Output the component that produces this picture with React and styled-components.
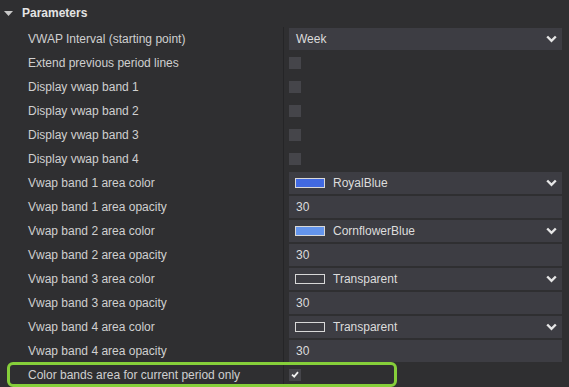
import styled, { createGlobalStyle } from "styled-components";

const GlobalStyle = createGlobalStyle`
  html, body {
    margin: 0;
    padding: 0;
    background: #2f2f31;
    overflow: hidden;
  }
  body {
    font-family: "Liberation Sans", Arial, sans-serif;
  }
`;

const rows = [
  { label: "VWAP Interval (starting point)", type: "select", value: "Week" },
  { label: "Extend previous period lines", type: "check" },
  { label: "Display vwap band 1", type: "check" },
  { label: "Display vwap band 2", type: "check" },
  { label: "Display vwap band 3", type: "check" },
  { label: "Display vwap band 4", type: "check" },
  { label: "Vwap band 1 area color", type: "color", value: "RoyalBlue", swatch: "#4169e1" },
  { label: "Vwap band 1 area opacity", type: "text", value: "30" },
  { label: "Vwap band 2 area color", type: "color", value: "CornflowerBlue", swatch: "#6495ed" },
  { label: "Vwap band 2 area opacity", type: "text", value: "30" },
  { label: "Vwap band 3 area color", type: "color", value: "Transparent" },
  { label: "Vwap band 3 area opacity", type: "text", value: "30" },
  { label: "Vwap band 4 area color", type: "color", value: "Transparent" },
  { label: "Vwap band 4 area opacity", type: "text", value: "30" },
  { label: "Color bands area for current period only", type: "check", checked: true, highlight: true },
];

const Chevron = () => (
  <svg width="11" height="8" viewBox="0 0 11 8">
    <path d="M1.2 1.5 L5.5 5.8 L9.8 1.5" fill="none" stroke="#e6e6e6" strokeWidth="2.4" />
  </svg>
);

const Check = () => (
  <svg width="8" height="7" viewBox="0 0 8 7">
    <path d="M1 3.6 L3.2 5.6 L7 1.2" fill="none" stroke="#f2f2f2" strokeWidth="1.8" />
  </svg>
);

const Arrow = () => (
  <svg width="9" height="5" viewBox="0 0 9 5">
    <path d="M0 0 H9 L4.5 5 Z" fill="#c8c8c8" />
  </svg>
);

const App = () => {
  return (
    <Panel>
      <GlobalStyle />
      <Header>
        <Arrow />
        <span>Parameters</span>
      </Header>
      <Grid>
        {rows.map((row) => (
          <Row key={row.label}>
            <Label>{row.label}</Label>
            <Value>
              {row.type === "check" && (
                <CheckBox>{row.checked && <Check />}</CheckBox>
              )}
              {row.type === "text" && <Field>{row.value}</Field>}
              {row.type === "select" && (
                <Field>
                  <span>{row.value}</span>
                  <Spacer />
                  <Chevron />
                </Field>
              )}
              {row.type === "color" && (
                <Field>
                  <Swatch $color={row.swatch} />
                  <span>{row.value}</span>
                  <Spacer />
                  <Chevron />
                </Field>
              )}
            </Value>
            {row.highlight && <Highlight />}
          </Row>
        ))}
      </Grid>
    </Panel>
  );
};

export default App;

const Panel = styled.div`
  width: 569px;
  height: 387px;
  background: #2f2f31;
  color: #d2d2d2;
  font-size: 12px;
  overflow: hidden;
`;

const Header = styled.div`
  height: 27px;
  display: flex;
  align-items: center;
  gap: 9px;
  padding-left: 4px;
  padding-bottom: 1px;
  box-sizing: border-box;
  font-weight: bold;
  font-size: 12px;
  color: #e4e4e4;
`;

const Grid = styled.div`
  display: flex;
  flex-direction: column;
`;

const Row = styled.div`
  position: relative;
  height: 24px;
  display: grid;
  grid-template-columns: 283px 1px 1fr;
  &::before {
    content: "";
    grid-column: 2;
    grid-row: 1;
    background: #252527;
  }
`;

const Label = styled.div`
  grid-column: 1;
  grid-row: 1;
  display: flex;
  align-items: center;
  padding-left: 28px;
  color: #d0d0d0;
  white-space: nowrap;
`;

const Value = styled.div`
  grid-column: 3;
  grid-row: 1;
  display: flex;
  align-items: center;
  padding: 0 7px 1px 5px;
`;

const Field = styled.div`
  flex: 1;
  height: 22px;
  background: #3d3d43;
  display: flex;
  align-items: center;
  padding: 0 5px 0 7px;
  color: #dcdcdc;
  font-size: 12px;
  box-sizing: border-box;
`;

const Spacer = styled.div`
  flex: 1;
`;

const Swatch = styled.div`
  width: 28px;
  height: 8px;
  margin-left: -1px;
  margin-right: 8px;
  background: ${(p) => p.$color || "transparent"};
  border: 1px solid #d8d8d8;
`;

const CheckBox = styled.div`
  width: 12px;
  height: 12px;
  background: #45454a;
  display: flex;
  align-items: center;
  justify-content: center;
`;

const Highlight = styled.div`
  position: absolute;
  left: 7px;
  top: -1px;
  width: 390px;
  height: 25px;
  box-sizing: border-box;
  border: 3px solid #86cf3a;
  border-radius: 6px;
  pointer-events: none;
`;
